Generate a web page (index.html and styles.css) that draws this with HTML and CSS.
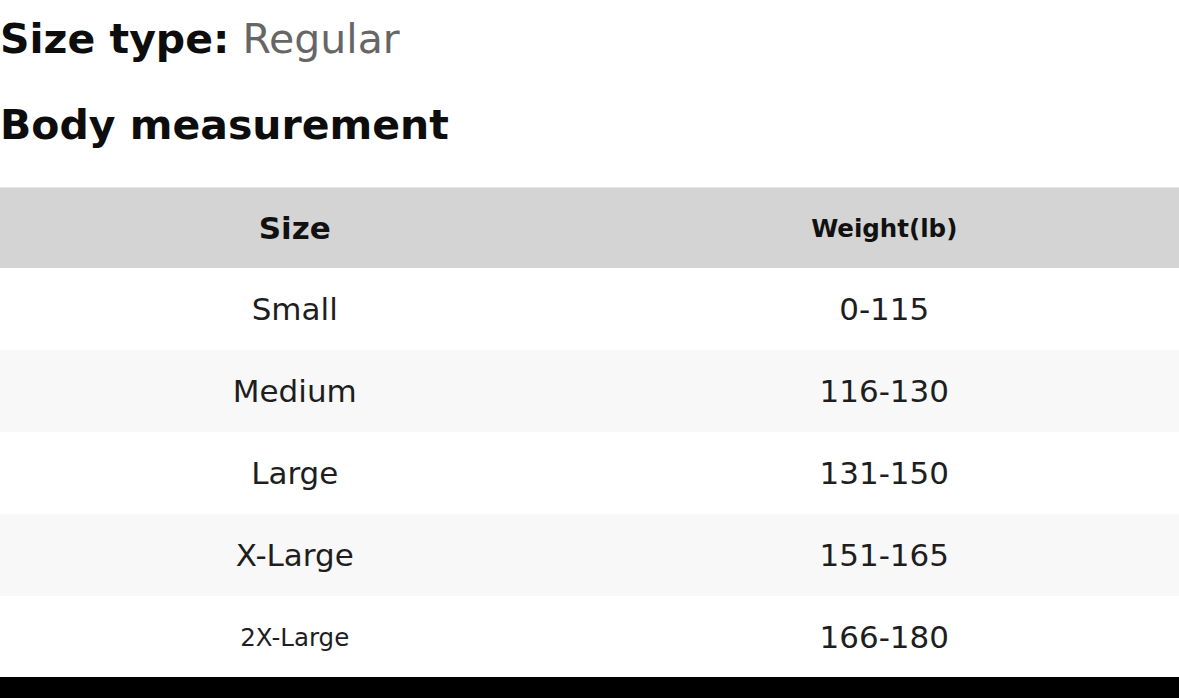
FILE: index.html
```html
<!DOCTYPE html>
<html>
<head>
<meta charset="utf-8">
<link rel="stylesheet" href="styles.css">
</head>
<body>
<div class="page">
  <p class="size-type"><span class="label">Size type:</span> <span class="value">Regular</span></p>
  <h2 class="title">Body measurement</h2>
  <table class="chart">
    <thead>
      <tr><th class="h-size">Size</th><th class="h-weight">Weight(lb)</th></tr>
    </thead>
    <tbody>
      <tr><td>Small</td><td>0-115</td></tr>
      <tr><td>Medium</td><td>116-130</td></tr>
      <tr><td>Large</td><td>131-150</td></tr>
      <tr><td>X-Large</td><td>151-165</td></tr>
      <tr><td class="small">2X-Large</td><td>166-180</td></tr>
    </tbody>
  </table>
</div>
<div class="bottom-bar"></div>
</body>
</html>
```

FILE: styles.css
```css
html, body {
  margin: 0;
  padding: 0;
  background: #fff;
}
body {
  font-family: "DejaVu Sans", sans-serif;
  color: #1a1a1a;
  width: 1179px;
  height: 698px;
  overflow: hidden;
  display: flex;
  flex-direction: column;
}
.page {
  flex: 1;
  min-height: 0;
  overflow: hidden;
  padding-top: 16px;
}
.size-type {
  margin: 0;
  font-size: 41px;
  line-height: 46px;
}
.size-type .label {
  font-weight: bold;
  color: #0d0d0d;
}
.size-type .value {
  color: #666;
}
.title {
  margin: 40px 0 0;
  font-size: 41px;
  line-height: 46px;
  font-weight: bold;
  color: #0d0d0d;
}
.chart {
  margin-top: 39px;
  width: 100%;
  border-collapse: collapse;
  table-layout: fixed;
}
.chart th {
  background: #d4d4d4;
  height: 80px;
  padding: 0;
  font-weight: bold;
  color: #111;
  border-top: 1px solid #e6e6e6;
  text-align: center;
}
.h-size {
  font-size: 31px;
}
.h-weight {
  font-size: 24.5px;
}
.chart td {
  height: 82px;
  padding: 0;
  text-align: center;
  font-size: 31px;
  color: #1e1e1e;
}
.chart tbody tr:nth-child(even) td {
  background: #f8f8f8;
}
.chart td.small {
  font-size: 24.5px;
}
.bottom-bar {
  height: 21px;
  background: #000;
  flex: none;
}
```
